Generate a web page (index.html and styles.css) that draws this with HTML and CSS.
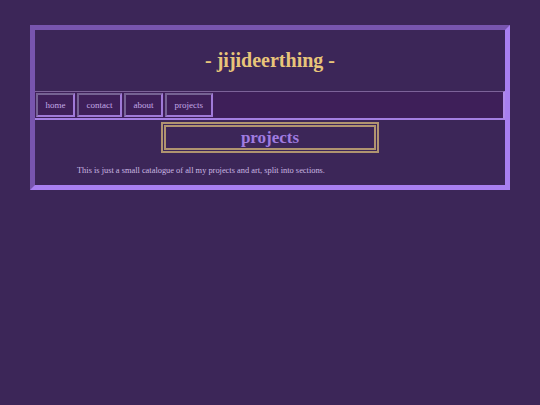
FILE: index.html
```html
<!DOCTYPE html>
<html>
<head>
<meta charset="utf-8">
<title>jijideerthing - projects</title>
<link rel="stylesheet" href="styles.css">
</head>
<body>
<div class="frame">
  <header class="header">
    <h1 class="site-title">- jijideerthing -</h1>
  </header>
  <nav class="nav">
    <a class="nav-item" href="#">home</a>
    <a class="nav-item" href="#">contact</a>
    <a class="nav-item" href="#">about</a>
    <a class="nav-item" href="#">projects</a>
  </nav>
  <main class="main">
    <h2 class="page-title">projects</h2>
    <p class="intro">This is just a small catalogue of all my projects and art, split into sections.</p>
  </main>
</div>
</body>
</html>
```
FILE: styles.css
```css
html, body {
  margin: 0;
  padding: 0;
  background: #3c2658;
}
body {
  padding-top: 25px;
  font-family: "Liberation Serif", "Times New Roman", serif;
}
.frame {
  width: 470px;
  margin: 0 auto;
  border: 5px solid;
  border-color: #7855ae #a87ff0 #a87ff0 #7855ae;
  background: #3c2658;
}
.header {
  height: 61px;
  display: flex;
  align-items: center;
  justify-content: center;
}
.site-title {
  margin: 0;
  font-size: 20px;
  font-weight: bold;
  color: #e8c57a;
}
.nav {
  height: 24px;
  display: flex;
  gap: 2px;
  padding: 1px 0 1px 1px;
  background: #3e1f59;
  border-style: solid;
  border-width: 1px 2px 2px 0;
  border-color: #7c6299 #b08be8 #a47fe2 #7c6299;
}
.nav-item {
  display: flex;
  align-items: center;
  padding: 0 7.5px;
  font-size: 9px;
  color: #c3a8e6;
  text-decoration: none;
  background: #3e1f59;
  border: 2px solid;
  border-color: #756293 #a07ad8 #a07ad8 #756293;
}
.main {
  padding: 2px 0 9px;
  display: flex;
  flex-direction: column;
}
.page-title {
  align-self: center;
  width: 208px;
  margin: 0;
  padding: 0;
  line-height: 21px;
  text-align: center;
  font-size: 17px;
  font-weight: bold;
  color: #a07ce0;
  border: 5px double #b09470;
}
.intro {
  margin: 13px 0 0 42px;
  font-size: 8.4px;
  line-height: 10px;
  color: #cbb8e2;
}
```
